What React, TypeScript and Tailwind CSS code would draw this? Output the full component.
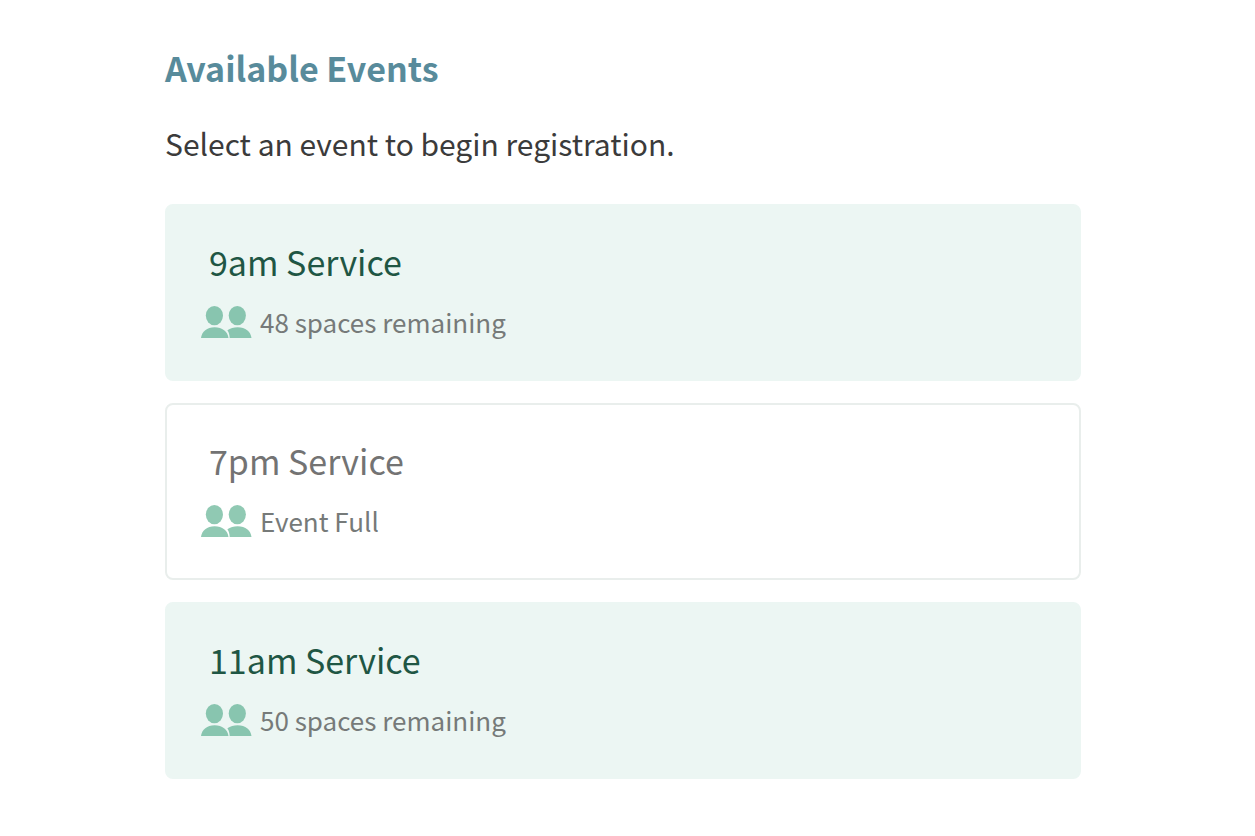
type ServiceEvent = {
  title: string;
  status: string;
  full?: boolean;
};

const events: ServiceEvent[] = [
  { title: "9am Service", status: "48 spaces remaining" },
  { title: "7pm Service", status: "Event Full", full: true },
  { title: "11am Service", status: "50 spaces remaining" },
];

const PeopleIcon = () => {
  return (
    <svg
      className="w-[51px] h-8 shrink-0"
      viewBox="0 0 51 32"
      fill="currentColor"
      aria-hidden="true"
    >
      <ellipse cx="13.4" cy="9.6" rx="8.6" ry="9.6" />
      <ellipse cx="36.3" cy="9.6" rx="8.6" ry="9.6" />
      <path d="M0 32C0.8 25.5 6 21.2 13.6 21.2S26.7 25.5 27.5 32Z" />
      <path d="M26.4 24.2C29.2 22.2 32.8 21.2 36.6 21.2C44.6 21.2 49.7 25.5 50.5 32H28.7C28.5 28.8 28 26.4 26.4 24.2Z" />
    </svg>
  );
};

const EventCard = ({ title, status, full }: ServiceEvent) => {
  return (
    <button
      type="button"
      disabled={full}
      className={`block w-full rounded-lg border-2 px-[34px] pt-[30px] pb-9 text-left ${
        full ? "border-[#e9eeec] bg-white" : "border-[#ecf6f3] bg-[#ecf6f3]"
      }`}
    >
      <span
        className={`block pl-2 text-[34px] leading-[52px] ${
          full ? "text-[#737373]" : "text-[#1f5644]"
        }`}
      >
        {title}
      </span>
      <span className="mt-3 flex items-center gap-2 text-[26px] leading-[43px] text-[#767a79]">
        <span className={full ? "text-[#90c9b3]" : "text-[#88c5af]"}>
          <PeopleIcon />
        </span>
        {status}
      </span>
    </button>
  );
};

const App = () => {
  return (
    <main className="pt-10 pb-14 pl-[165px] pr-[174px] font-['Noto_Sans_CJK_SC',sans-serif]">
      <h1 className="text-[34px] leading-[56px] font-bold text-[#588b9b]">
        Available Events
      </h1>
      <p className="mt-[22px] text-[30px] leading-[50px] text-[#3b3b3b]">
        Select an event to begin registration.
      </p>
      <ul className="mt-9 flex flex-col gap-[22px]">
        {events.map((event) => (
          <li key={event.title}>
            <EventCard {...event} />
          </li>
        ))}
      </ul>
    </main>
  );
};

export default App;
